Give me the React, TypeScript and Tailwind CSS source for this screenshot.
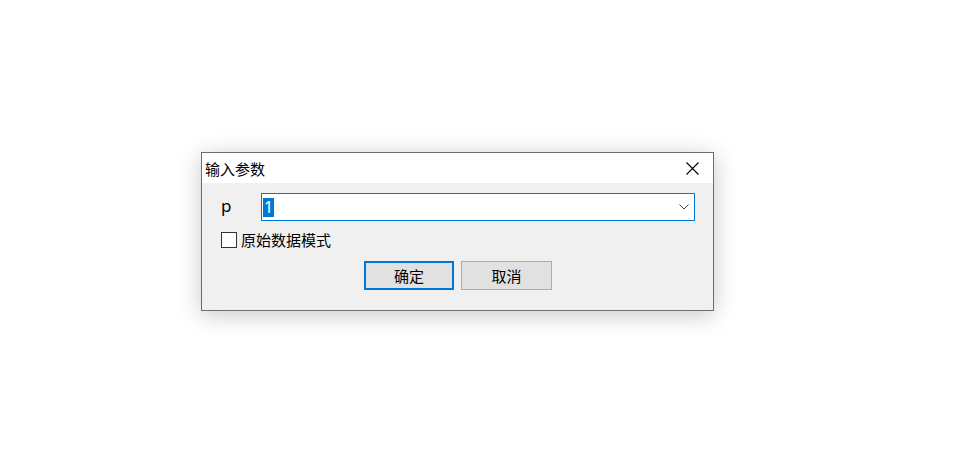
import React from "react"

const font = { fontFamily: '"Noto Sans CJK SC", "Noto Sans", sans-serif' }

const CloseIcon = () => (
  <svg width="13" height="13" viewBox="0 0 13 13" className="block">
    <path d="M0.5 0.5 L12.5 12.5 M12.5 0.5 L0.5 12.5" stroke="#000" strokeWidth="1.1" fill="none" />
  </svg>
)

const Chevron = () => (
  <svg width="10" height="6" viewBox="0 0 10 6" className="block">
    <path d="M0.5 0.5 L5 5 L9.5 0.5" stroke="#444" strokeWidth="1" fill="none" />
  </svg>
)

export default function App() {
  return (
    <div className="w-[958px] h-[452px] bg-white pt-[152px] pl-[201px] text-black" style={font}>
      <div className="w-[513px] h-[159px] border border-[#6d6d6d] bg-[#f0f0f0] flex flex-col shadow-[0_4px_22px_rgba(0,0,0,0.22)]">
        {/* title bar */}
        <div className="h-[30px] bg-white flex items-center justify-between pl-[3px] pr-[14px]">
          <span className="text-[15px] leading-none">输入参数</span>
          <CloseIcon />
        </div>
        {/* body */}
        <div className="flex flex-col pt-[10px]">
          <div className="flex items-center h-[28px] pl-[19px]">
            <span className="w-[40px] text-[17px] leading-none pb-[3px]" style={{ fontFamily: '"Noto Sans", sans-serif' }}>
              p
            </span>
            <div className="w-[434px] h-[28px] border border-[#0078d7] bg-white flex items-center justify-between pl-[1px] pr-[5px]">
              <span
                className="bg-[#0078d7] text-white text-[16px] leading-[19px] h-[19px] w-[11px] flex justify-center"
                style={{ fontFamily: '"Noto Sans", sans-serif' }}
              >
                1
              </span>
              <Chevron />
            </div>
          </div>
          <div className="flex items-center mt-[10px] pl-[19px] h-[17px]">
            <div className="w-[16px] h-[16px] border border-[#333] bg-white" />
            <span className="ml-[4px] text-[15px] leading-none">原始数据模式</span>
          </div>
          <div className="flex gap-[7px] mt-[13px] pl-[162px]">
            <button className="w-[90px] h-[29px] border-2 border-[#0078d7] bg-[#e1e1e1] text-[15px] leading-none">
              确定
            </button>
            <button className="w-[91px] h-[29px] border border-[#adadad] bg-[#e1e1e1] text-[15px] leading-none">
              取消
            </button>
          </div>
        </div>
      </div>
    </div>
  )
}
